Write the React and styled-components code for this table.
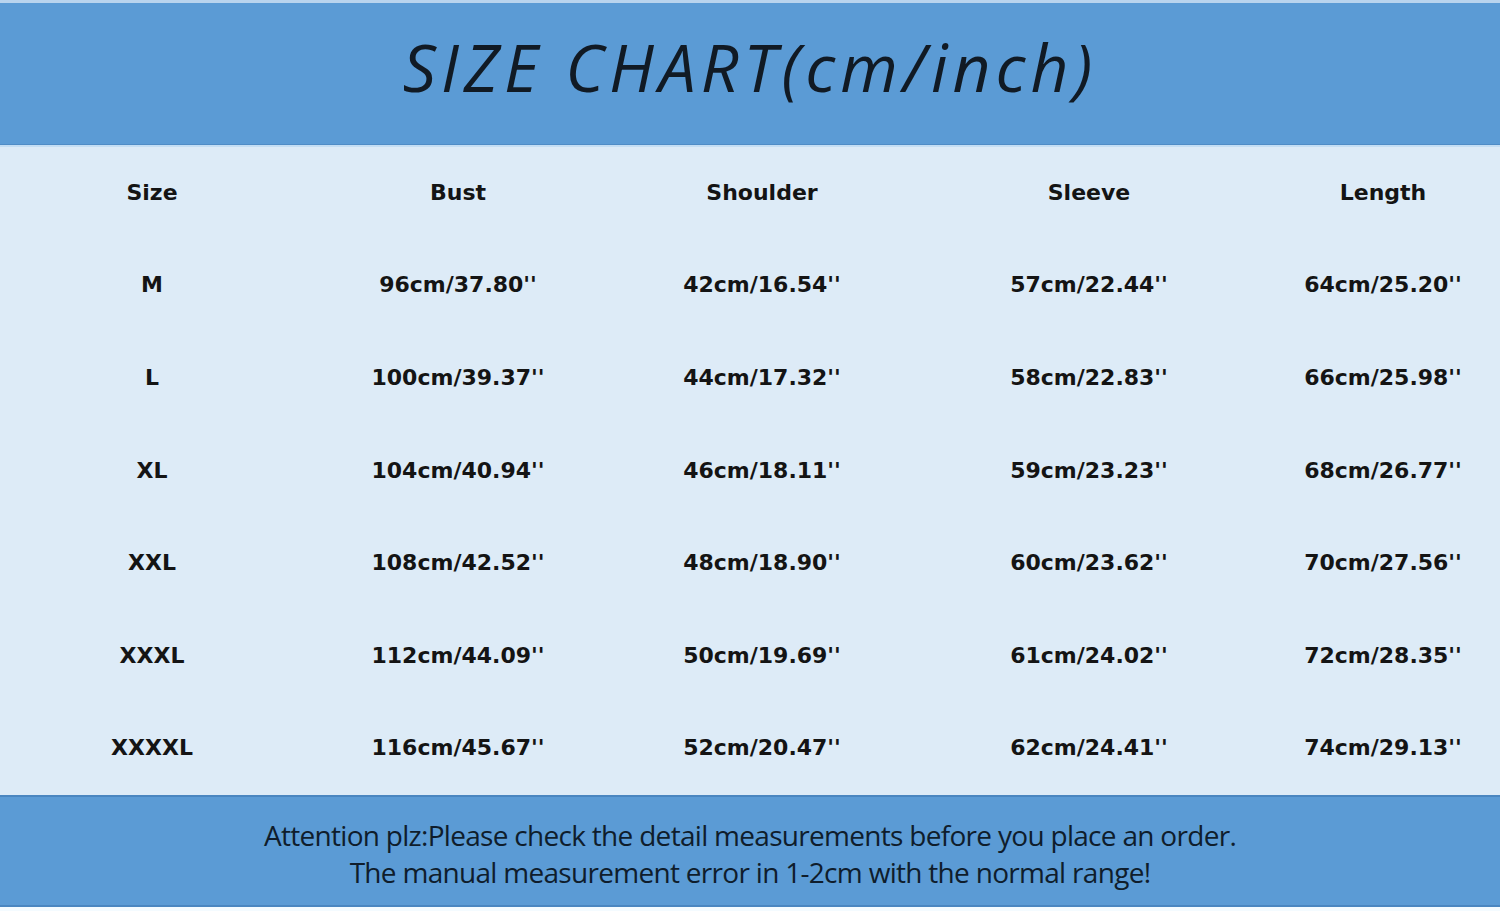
import styled, { createGlobalStyle } from "styled-components";

const HEADERS = ["Size", "Bust", "Shoulder", "Sleeve", "Length"];

const ROWS = [
  ["M", "96cm/37.80''", "42cm/16.54''", "57cm/22.44''", "64cm/25.20''"],
  ["L", "100cm/39.37''", "44cm/17.32''", "58cm/22.83''", "66cm/25.98''"],
  ["XL", "104cm/40.94''", "46cm/18.11''", "59cm/23.23''", "68cm/26.77''"],
  ["XXL", "108cm/42.52''", "48cm/18.90''", "60cm/23.62''", "70cm/27.56''"],
  ["XXXL", "112cm/44.09''", "50cm/19.69''", "61cm/24.02''", "72cm/28.35''"],
  ["XXXXL", "116cm/45.67''", "52cm/20.47''", "62cm/24.41''", "74cm/29.13''"],
];

const GlobalStyle = createGlobalStyle`
  html, body {
    margin: 0;
    padding: 0;
    background: #ffffff;
  }
`;

export default function App() {
  return (
    <>
      <GlobalStyle />
      <Page>
        <Header>
          <Title>SIZE CHART(cm/inch)</Title>
        </Header>
        <Table>
          <Row>
            {HEADERS.map((h) => (
              <Cell key={h}>{h}</Cell>
            ))}
          </Row>
          {ROWS.map((row) => (
            <Row key={row[0]}>
              {row.map((value, i) => (
                <Cell key={i}>{value}</Cell>
              ))}
            </Row>
          ))}
        </Table>
        <Footer>
          <Note>Attention plz:Please check the detail measurements before you place an order.</Note>
          <Note>The manual measurement error in 1-2cm with the normal range!</Note>
        </Footer>
      </Page>
    </>
  );
}

const Page = styled.div`
  width: 1500px;
  height: 911px;
  display: flex;
  flex-direction: column;
  background: #f4fbff;
  border-top: 3px solid #b9d4ee;
  box-sizing: border-box;
  overflow: hidden;
`;

const Header = styled.div`
  height: 142px;
  flex-shrink: 0;
  background: #5b9bd5;
  border-bottom: 1px solid #4f8cc6;
  box-sizing: border-box;
  display: flex;
  align-items: center;
  justify-content: center;
`;

const Title = styled.h1`
  margin: 0 0 16px 0;
  font-family: "Open Sans", "DejaVu Sans", sans-serif;
  font-size: 66px;
  font-weight: 400;
  font-style: italic;
  letter-spacing: 5px;
  color: #111a24;
`;

const Table = styled.div`
  height: 650px;
  flex-shrink: 0;
  background: #ddebf7;
  border-top: 2px solid #c4def4;
  box-sizing: border-box;
  display: flex;
  flex-direction: column;
`;

const Row = styled.div`
  flex: 1;
  display: grid;
  grid-template-columns: 304px 308px 300px 354px 234px;
  align-items: center;
`;

const Cell = styled.div`
  text-align: center;
  font-family: "DejaVu Sans", "Liberation Sans", sans-serif;
  font-size: 22px;
  font-weight: 700;
  color: #141414;
  margin-top: -2px;
`;

const Footer = styled.div`
  height: 112px;
  flex-shrink: 0;
  background: #5b9bd5;
  border-top: 2px solid #4a86c0;
  border-bottom: 2px solid #4a86c0;
  box-sizing: border-box;
  padding-top: 6px;
  display: flex;
  flex-direction: column;
  align-items: center;
  justify-content: center;
  gap: 4px;
`;

const Note = styled.p`
  margin: 0;
  font-family: "Open Sans", "Liberation Sans", sans-serif;
  font-size: 28px;
  line-height: 33px;
  color: #0f1d2c;
  letter-spacing: -0.7px;
`;
